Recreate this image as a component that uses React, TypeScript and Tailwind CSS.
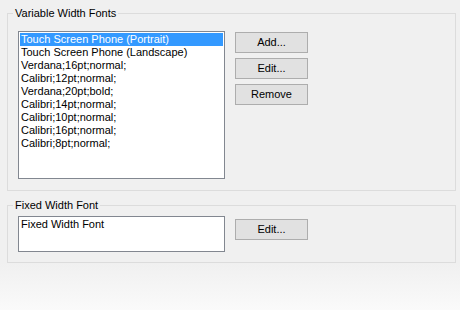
import React from "react";

const items = [
  "Touch Screen Phone (Portrait)",
  "Touch Screen Phone (Landscape)",
  "Verdana;16pt;normal;",
  "Calibri;12pt;normal;",
  "Verdana;20pt;bold;",
  "Calibri;14pt;normal;",
  "Calibri;10pt;normal;",
  "Calibri;16pt;normal;",
  "Calibri;8pt;normal;",
];

function Btn({ children }: { children: React.ReactNode }) {
  return (
    <button className="w-[73px] h-[21px] bg-[#e1e1e1] border border-[#adadad] text-[11px] leading-[19px] text-black text-center">
      {children}
    </button>
  );
}

export default function App() {
  return (
    <div
      className="w-[460px] h-[310px] flex flex-col bg-[#f0f0f0] text-black"
      style={{ fontFamily: '"Liberation Sans", Arial, sans-serif' }}
    >
      <div className="flex flex-col pt-[7px] px-[7px]">
        <fieldset className="border border-[#dcdcdc] w-[449px] pl-[10px] pt-[11px] pb-[11px]">
          <legend className="ml-[-5px] px-[2px] text-[11px] leading-[13px]">Variable Width Fonts</legend>
          <div className="flex">
            <div className="w-[207px] h-[148px] bg-white border border-[#828790] p-[1px] text-[11px] leading-[13px]">
              {items.map((t, i) => (
                <div
                  key={t}
                  className={
                    "h-[13px] pl-[1px] whitespace-nowrap " +
                    (i === 0 ? "bg-[#3399ff] text-white" : "")
                  }
                >
                  {t}
                </div>
              ))}
            </div>
            <div className="flex flex-col gap-[5px] ml-[10px] mt-[1px]">
              <Btn>Add...</Btn>
              <Btn>Edit...</Btn>
              <Btn>Remove</Btn>
            </div>
          </div>
        </fieldset>
        <fieldset className="mt-[8px] border border-[#dcdcdc] w-[449px] pl-[10px] pt-[4px] pb-[10px]">
          <legend className="ml-[-5px] px-[2px] text-[11px] leading-[13px]">Fixed Width Font</legend>
          <div className="flex">
            <div className="w-[207px] h-[36px] bg-white border border-[#828790] px-[2px] py-[1px] text-[11px] leading-[13px]">
              Fixed Width Font
            </div>
            <div className="ml-[10px]">
              <Btn>Edit...</Btn>
            </div>
          </div>
        </fieldset>
      </div>
      <div className="flex-1 bg-gradient-to-b from-[#f0f0f0] to-[#fafafa]" />
    </div>
  );
}
